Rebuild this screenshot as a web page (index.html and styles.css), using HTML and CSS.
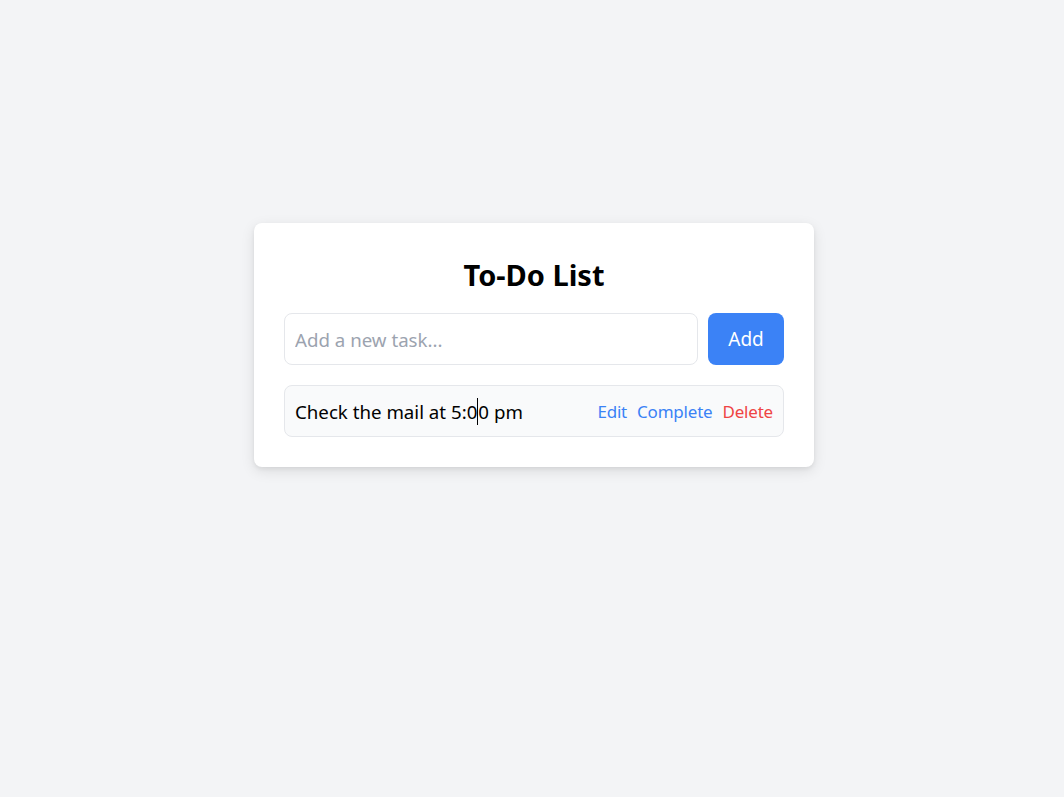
FILE: index.html
```html
<!DOCTYPE html>
<html lang="en">
<head>
<meta charset="utf-8">
<title>To-Do List</title>
<link rel="stylesheet" href="styles.css">
</head>
<body>
<main class="page">
  <section class="card">
    <h1 class="title">To-Do List</h1>
    <form class="add-row">
      <input class="task-input" type="text" placeholder="Add a new task...">
      <button class="add-btn" type="button">Add</button>
    </form>
    <ul class="tasks">
      <li class="task">
        <span class="task-text">Check the mail at 5:0<span class="caret"></span>0 pm</span>
        <span class="actions">
          <span class="act act-edit">Edit</span>
          <span class="act act-complete">Complete</span>
          <span class="act act-delete">Delete</span>
        </span>
      </li>
    </ul>
  </section>
</main>
</body>
</html>
```
FILE: styles.css
```css
* { box-sizing: border-box; }
html, body { margin: 0; padding: 0; }
body {
  background: #f3f4f6;
  font-family: "Noto Sans", "Open Sans", "Liberation Sans", sans-serif;
  color: #000;
}
.page {
  height: 797px;
  display: flex;
  align-items: center;
  justify-content: center;
  padding: 0 0 108px 4px;
}
.card {
  width: 560px;
  background: #fff;
  border-radius: 8px;
  box-shadow: 0 4px 14px rgba(0,0,0,0.10), 0 2px 4px rgba(0,0,0,0.06);
  padding: 30px;
}
.title {
  margin: 0 0 16px;
  text-align: center;
  font-size: 29px;
  font-weight: 700;
  line-height: 44px;
}
.add-row {
  display: flex;
  gap: 10px;
  margin: 0 0 20px;
}
.task-input {
  flex: 1;
  height: 52px;
  border: 1px solid #e5e7eb;
  border-radius: 8px;
  padding: 2px 10px 0;
  font-family: inherit;
  font-size: 18.7px;
  color: #111;
  outline: none;
}
.task-input::placeholder { color: #9ca3af; }
.add-btn {
  width: 76px;
  height: 52px;
  border: none;
  border-radius: 8px;
  background: #3b82f6;
  color: #fff;
  font-family: inherit;
  font-size: 19px;
  padding-top: 2px;
}
.tasks { list-style: none; margin: 0; padding: 0; }
.task {
  display: flex;
  align-items: center;
  justify-content: space-between;
  height: 52px;
  padding: 2px 10px 0;
  background: #f9fafb;
  border: 1px solid #e5e7eb;
  border-radius: 8px;
  font-size: 18.7px;
}
.caret {
  display: inline-block;
  width: 0;
  height: 27px;
  border-left: 1px solid #000;
  vertical-align: -6px;
}
.actions { display: flex; gap: 10px; font-size: 17px; letter-spacing: -0.2px; }
.act-edit, .act-complete { color: #3b82f6; }
.act-delete { color: #ef4444; }
```
